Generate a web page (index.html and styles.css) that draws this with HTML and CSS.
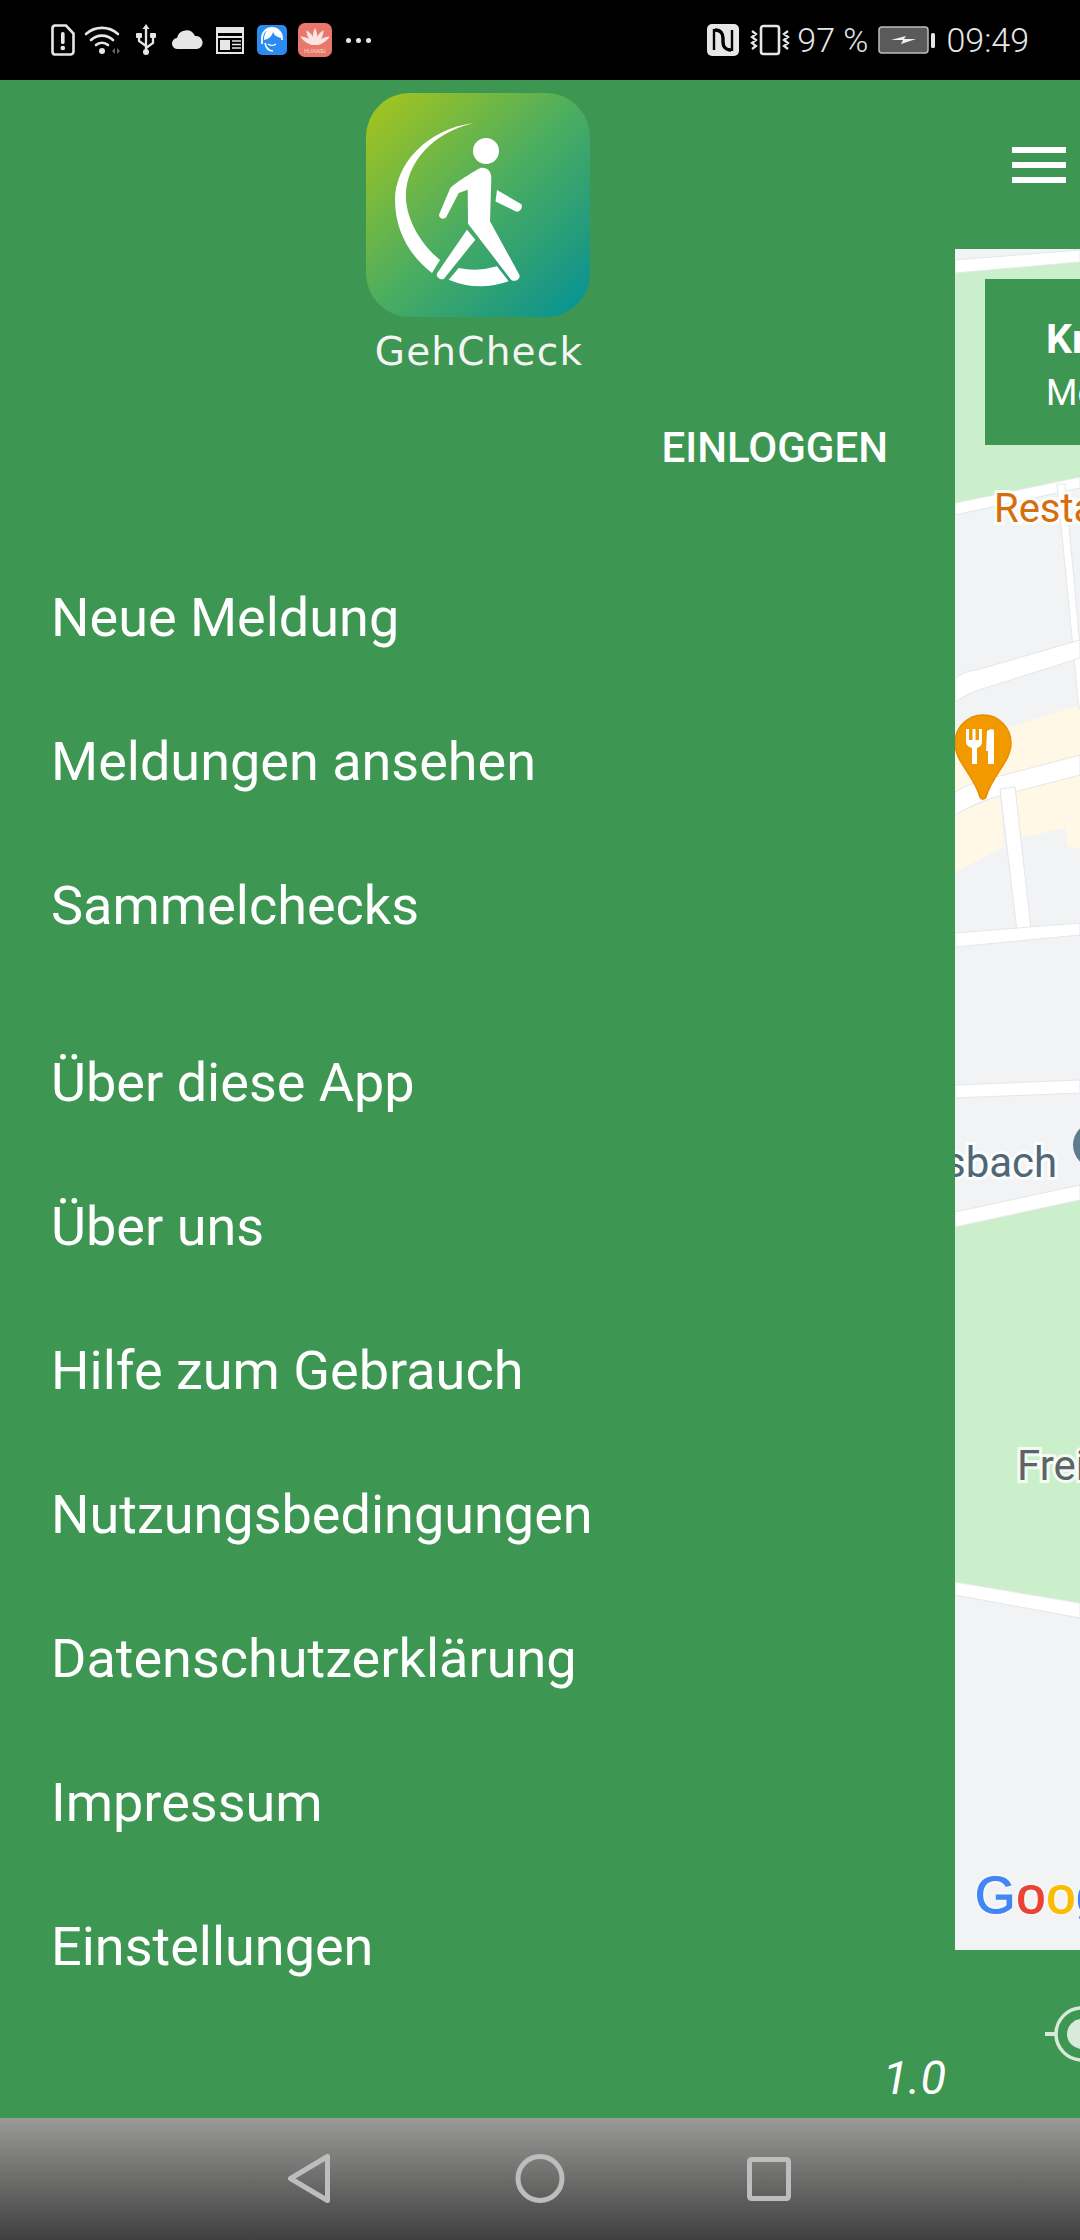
FILE: index.html
```html
<!DOCTYPE html>
<html lang="de">
<head>
  <meta charset="UTF-8">
  <title>GehCheck</title>
  <link rel="stylesheet" href="styles.css">
</head>
<body>
  <header class="status">
    <div class="status-left">
      <svg class="ic" width="24" height="32" viewBox="0 0 24 32"><path d="M3.500 1.500H15L22.500 9.500V27.500a3 3 0 0 1-3 3H3.500a3 3 0 0 1-2-3V4.500a3 3 0 0 1 2-3z" fill="none" stroke="#e6e6e6" stroke-width="2.600"/><rect x="10" y="8" width="3.600" height="12" rx="1.600" fill="#e6e6e6"/><circle cx="11.800" cy="24" r="2.300" fill="#e6e6e6"/></svg>
      <svg class="ic" width="37" height="32" viewBox="0 0 37 32"><path d="M2 10a24 24 0 0 1 32 0M7 16a16 16 0 0 1 22 0M12 21a9 9 0 0 1 12 0" fill="none" stroke="#e6e6e6" stroke-width="2.600" stroke-linecap="round"/><circle cx="18" cy="27" r="3" fill="#e6e6e6"/><path d="M28 27l3-3v6zM33 24l3 3-3 3z" fill="#666"/></svg>
      <svg class="ic" width="22" height="32" viewBox="0 0 22 32"><path d="M11 4v26M11 22l-7-5v-5M11 24l7-5v-7" fill="none" stroke="#e6e6e6" stroke-width="2.300"/><path d="M11 0l3.500 5h-7z" fill="#e6e6e6"/><circle cx="11" cy="28" r="3" fill="#e6e6e6"/><rect x="1" y="9" width="6" height="5" rx="1" fill="#e6e6e6"/><rect x="15" y="9" width="6" height="5" rx="1" fill="#e6e6e6"/></svg>
      <svg class="ic" width="31" height="32" viewBox="0 0 31 32"><path d="M6 25a5.500 5.500 0 0 1-1-11 9.500 9.500 0 0 1 18-2 6.500 6.500 0 0 1 2 13z" fill="#e6e6e6"/></svg>
      <svg class="ic" width="28" height="32" viewBox="0 0 28 32"><rect x="1" y="4" width="26" height="25" fill="none" stroke="#e6e6e6" stroke-width="2"/><path d="M1 3h26v6H1zM1 12h26v2H1z" fill="#e6e6e6"/><rect x="4" y="16" width="10" height="10" fill="#e6e6e6"/><path d="M16 17h9M16 20.500h9M16 24h9" stroke="#e6e6e6" stroke-width="1.500"/></svg>
      <svg class="ic" width="30" height="32" viewBox="0 0 30 32"><rect y="1" width="30" height="30" rx="5" fill="#2a8cf0"/><path d="M5 20v-6a10 10 0 0 1 20 0v2" fill="none" stroke="#fff" stroke-width="1.800"/><path d="M7 16C7 8 11 4 16 4s8 4 8 10l-3-1c-3-1-4-3-5-5-1 4-4 7-9 8z" fill="#fff"/><path d="M11 20q4 3 8 0" fill="none" stroke="#fff" stroke-width="1.200"/><path d="M8 19c1 5 4 8 8 8" fill="none" stroke="#fff" stroke-width="1.600"/></svg>
      <svg class="ic" width="34" height="34" viewBox="0 0 34 34">
        <rect width="34" height="34" rx="7" fill="#e8776c"/>
        <g fill="#fbe4e1">
          <path d="M17 22c-3-4-3-12 0-17 3 5 3 13 0 17z"/>
          <path d="M17 22c-3-4-3-12 0-17 3 5 3 13 0 17z" transform="rotate(-30 17 22)"/>
          <path d="M17 22c-3-4-3-12 0-17 3 5 3 13 0 17z" transform="rotate(30 17 22)"/>
          <path d="M17 22c-3-4-3-12 0-17 3 5 3 13 0 17z" transform="rotate(-60 17 22)"/>
          <path d="M17 22c-3-4-3-12 0-17 3 5 3 13 0 17z" transform="rotate(60 17 22)"/>
        </g>
        <text class="hw" x="17" y="30" text-anchor="middle">HUAWEI</text>
      </svg>
      <span class="more"><i></i><i></i><i></i></span>
    </div>
    <div class="status-right">
      <svg class="ic" width="32" height="32" viewBox="0 0 32 32"><rect width="32" height="32" rx="5" fill="#e6e6e6"/><path d="M7 5v21M25 6v21" stroke="#000" stroke-width="2.400" fill="none"/><path d="M8 6c6 0 8 4 8 8v4c0 4 2 8 8 8" fill="none" stroke="#000" stroke-width="3.400"/></svg>
      <svg class="ic" width="40" height="32" viewBox="0 0 40 32"><rect x="11" y="2" width="18" height="28" rx="2.500" fill="none" stroke="#e6e6e6" stroke-width="2.600"/><path d="M2 7l4 3-4 3 4 3-4 3 4 3-4 3M38 7l-4 3 4 3-4 3 4 3-4 3 4 3" fill="none" stroke="#e6e6e6" stroke-width="2.200"/></svg>
      <span class="pct">97 %</span>
      <svg class="ic" width="58" height="28" viewBox="0 0 58 28"><rect x="1" y="1" width="49" height="26" rx="3" fill="#5a5a5a" stroke="#bdbdbd" stroke-width="1.500"/><rect x="53" y="7" width="4" height="15" rx="1.500" fill="#e6e6e6"/><path d="M13 14l15-4-2 3h12l-15 5 2-4z" fill="#f0f0f0"/></svg>
      <span class="clock">09:49</span>
    </div>
  </header>

  <main class="screen">
    <section class="drawer">
      <div class="brand">
        <svg class="logo" width="224" height="224" viewBox="0 0 224 224">
          <defs>
            <linearGradient id="logoBg" x1="0" y1="0" x2="1" y2="1">
              <stop offset="0" stop-color="#a9c61a"/>
              <stop offset="0.5" stop-color="#4bad60"/>
              <stop offset="0.82" stop-color="#1f9a80"/>
              <stop offset="1" stop-color="#00929c"/>
            </linearGradient>
          </defs>
          <rect width="224" height="224" rx="44" fill="url(#logoBg)"/>
          <g fill="#fff">
            <path d="M108 30C60 36 29 72 29 107c0 31 15 56 37 73l8-13C56 152 42 130 40 107 38 72 65 40 108 30z"/>
            <circle cx="120" cy="58" r="13"/>
            <path d="M114.300 75C121 74 125.300 78.300 125.300 85L124 128.300 153.300 181.700C155 185.700 149.300 190 145 186.700L102 130.700 101.700 96.700 92.700 100 80.300 124C77.700 127.300 72 125.300 73.300 121L84.300 95C89.300 90 107.700 78.300 114.300 75z"/>
            <path d="M131 97L155 111C158 114 153 121 149 118L129.500 108.500z"/>
            <path d="M101 136.700L109.300 146.700 78 185.700C75 188 69 184 71.300 180z"/>
            <path d="M92.700 175Q112 179 131 173.300L142.700 188.300Q112 199 82.700 186.700z"/>
          </g>
        </svg>
        <p class="brand-name">GehCheck</p>
      </div>
      <a class="login">EINLOGGEN</a>
      <nav class="menu menu-main">
        <a>Neue Meldung</a>
        <a>Meldungen ansehen</a>
        <a>Sammelchecks</a>
      </nav>
      <nav class="menu menu-info">
        <a>Über diese App</a>
        <a>Über uns</a>
        <a>Hilfe zum Gebrauch</a>
        <a>Nutzungsbedingungen</a>
        <a>Datenschutzerklärung</a>
        <a>Impressum</a>
        <a>Einstellungen</a>
      </nav>
      <p class="version">1.0</p>
    </section>

    <section class="content">
      <div class="burger"><i></i><i></i><i></i></div>
      <div class="map">
        <svg class="map-bg" width="125" height="1701" viewBox="0 0 125 1701">
          <rect width="125" height="1701" fill="#f1f3f4"/>
          <path class="park" d="M0 24L125 13V239L0 266z"/>
          <path class="park" d="M0 978L125 951V1354L0 1333z"/>
          <path class="food" d="M0 495L125 456V506L0 543z"/>
          <path class="food" d="M0 566L45 546 49 598 0 623z"/>
          <path class="food" d="M60 539L125 526V600L112 597 110 579 66 589z"/>
          <path class="road" d="M0 11L125 1V13L0 24z"/>
          <path class="road" d="M0 254L125 228V239L0 266z"/>
          <path class="road" d="M102 235H110L131 460H124z"/>
          <path class="road" d="M0 429C8 424 16 421 22 421L125 391V409L24 441C14 444 6 449 0 453z"/>
          <path class="road" d="M0 543C14 535 30 529 45 527L125 506V526L48 546C30 550 14 558 0 566z"/>
          <path class="road" d="M45 540L60 538 76 680 62 682z"/>
          <path class="road" d="M0 684L125 674V686L0 698z"/>
          <path class="road" d="M0 836L125 831V844L0 849z"/>
          <path class="road" d="M0 963L125 936V951L0 978z"/>
          <path class="road" d="M0 1333L125 1354V1369L0 1346z"/>
        </svg>
        <div class="callout">
          <strong>Kr</strong>
          <span>Me</span>
        </div>
        <span class="label label-rest">Resta</span>
        <span class="label label-bach">sbach</span>
        <span class="label label-frei">Frei</span>
        <span class="station"></span>
        <svg class="pin" width="60" height="88" viewBox="0 0 60 88">
          <path d="M29 1a28 28 0 0 1 28 28c0 19-19 32-25 54-1 3-5 3-6 0C20 61 1 48 1 29A28 28 0 0 1 29 1z" fill="#f29900" stroke="#e58f00" stroke-width="1.500"/>
          <path d="M12 15h3v11h3.500V15h3v11H25V15h3v13c0 3-2 5-5 6v16h-5V34c-3-1-6-3-6-6zM33 17c3-2 5-2 7-1v34h-6V37h-2z" fill="#fff"/>
        </svg>
        <p class="google"><b class="g-blue">G</b><b class="g-red">o</b><b class="g-yellow">o</b><b class="g-blue">g</b></p>
      </div>
      <svg class="locate" width="50" height="72" viewBox="0 0 50 72">
        <circle cx="37" cy="36" r="26" fill="none" stroke="#d8ead9" stroke-width="3.500"/>
        <circle cx="37" cy="36" r="15" fill="#d8ead9"/>
        <path d="M0 36h11M37 0v10M37 62v10" stroke="#d8ead9" stroke-width="4"/>
      </svg>
    </section>
  </main>

  <footer class="navbar">
    <svg width="46" height="52" viewBox="0 0 46 52"><path d="M4.500 25.500L41.500 3.500V47.500z" fill="none" stroke="#bdbdbd" stroke-width="5" stroke-linejoin="round"/></svg>
    <svg width="50" height="52" viewBox="0 0 50 52"><circle cx="25" cy="25.500" r="22" fill="none" stroke="#bdbdbd" stroke-width="5"/></svg>
    <svg width="44" height="44" viewBox="0 0 44 44"><rect x="2.500" y="2.500" width="39" height="39" rx="2" fill="none" stroke="#bdbdbd" stroke-width="5"/></svg>
  </footer>
</body>
</html>
```

FILE: styles.css
```css
* {
  box-sizing: border-box;
}

html,
body {
  margin: 0;
  padding: 0;
}

body {
  width: 1080px;
  height: 2240px;
  overflow: hidden;
  font-family: Roboto, "Liberation Sans", sans-serif;
  background: #3d9651;
  color: #fff;
}

.status {
  display: flex;
  justify-content: space-between;
  align-items: center;
  height: 80px;
  padding: 0 51px;
  background: #000;
  color: #e6e6e6;
}

.status-left,
.status-right {
  display: flex;
  align-items: center;
}

.ic {
  display: block;
}

.status-left .ic:nth-child(2) {
  margin-left: 9px;
}

.status-left .ic:nth-child(3) {
  margin-left: 14px;
}

.status-left .ic:nth-child(4) {
  margin-left: 15px;
}

.status-left .ic:nth-child(5),
.status-left .ic:nth-child(6) {
  margin-left: 13px;
}

.status-left .ic:nth-child(7) {
  margin-left: 11px;
}

.hw {
  font-family: "Liberation Sans", sans-serif;
  font-size: 5.500px;
  fill: #f9d5d0;
}

.more {
  display: flex;
  gap: 5px;
  margin-left: 14px;
}

.more i {
  width: 5px;
  height: 5px;
  border-radius: 50%;
  background: #e6e6e6;
}

.status-right {
  gap: 10px;
}

.status-right .ic:first-child {
  margin-right: 1px;
}

.pct,
.clock {
  font-size: 34px;
  font-weight: 300;
}

.pct {
  margin-left: -3px;
}

.screen {
  display: flex;
  height: 2038px;
}

.drawer {
  position: relative;
  width: 955px;
  flex: none;
}

.brand {
  display: flex;
  flex-direction: column;
  align-items: center;
  padding-top: 13px;
}

.logo {
  display: block;
}

.brand-name {
  margin: 13px 0 0 3px;
  font-family: "DejaVu Sans", sans-serif;
  font-size: 39px;
  line-height: 44px;
  letter-spacing: 1.200px;
  color: #f4f4f4;
}

.login {
  display: block;
  margin: 52px 67px 0 0;
  font-size: 42px;
  font-weight: 500;
  line-height: 44px;
  text-align: right;
}

.menu {
  display: flex;
  flex-direction: column;
  padding-left: 51px;
}

.menu a {
  height: 144px;
  font-size: 54px;
  line-height: 144px;
}

.menu-main {
  margin-top: 76px;
}

.menu-info {
  margin-top: 33px;
}

.version {
  position: absolute;
  right: 9px;
  bottom: 13px;
  margin: 0;
  font-size: 47px;
  font-style: italic;
  line-height: 54px;
}

.content {
  position: relative;
  flex: 1;
}

.burger {
  display: flex;
  flex-direction: column;
  gap: 9px;
  width: 54px;
  margin: 67px 0 0 57px;
}

.burger i {
  height: 6px;
  background: #fff;
}

.map {
  position: relative;
  width: 125px;
  height: 1701px;
  margin-top: 66px;
  overflow: hidden;
}

.map-bg {
  display: block;
}

.park {
  fill: #ccefcb;
}

.food {
  fill: #fff8e7;
}

.road {
  fill: #fff;
  stroke: #e4e6e8;
  stroke-width: 1;
}

.callout {
  position: absolute;
  top: 30px;
  left: 30px;
  display: flex;
  flex-direction: column;
  width: 200px;
  height: 166px;
  padding: 38px 0 0 61px;
  background: #3d9651;
}

.callout strong {
  font-size: 41px;
  line-height: 44px;
}

.callout span {
  margin-top: 9px;
  font-size: 36px;
  line-height: 46px;
}

.label {
  position: absolute;
  font-size: 42px;
  line-height: 48px;
  white-space: nowrap;
  -webkit-text-stroke: 6px rgba(255, 255, 255, 0.75);
  paint-order: stroke fill;
}

.label-rest {
  top: 236px;
  left: 39px;
  font-size: 40px;
  color: #d56e0c;
}

.label-bach {
  top: 890px;
  left: -11px;
  color: #4f6776;
}

.label-frei {
  top: 1193px;
  left: 62px;
  color: #5f6368;
}

.station {
  position: absolute;
  top: 873px;
  left: 118px;
  width: 46px;
  height: 46px;
  border-radius: 50%;
  background: #5f7b8e;
}

.pin {
  position: absolute;
  top: 465px;
  left: -1px;
}

.google {
  position: absolute;
  top: 1618px;
  left: 20px;
  margin: 0;
  font-family: "Liberation Sans", sans-serif;
  font-size: 52px;
  line-height: 56px;
  letter-spacing: 1px;
  white-space: nowrap;
  text-shadow: 0 0 4px #fff, 0 0 4px #fff;
}

.google b {
  font-weight: 400;
  -webkit-text-stroke: 1.200px currentColor;
}

.g-blue {
  color: #4285f4;
}

.g-red {
  color: #ea4335;
}

.g-yellow {
  color: #fbbc05;
}

.locate {
  position: absolute;
  left: 90px;
  top: 1918px;
}

.navbar {
  display: flex;
  align-items: center;
  height: 122px;
  padding-left: 286px;
  background: linear-gradient(#9a9a98, #3f3f3f);
}

.navbar svg:nth-child(2) {
  margin-left: 183px;
}

.navbar svg:nth-child(3) {
  margin-left: 182px;
}
```
